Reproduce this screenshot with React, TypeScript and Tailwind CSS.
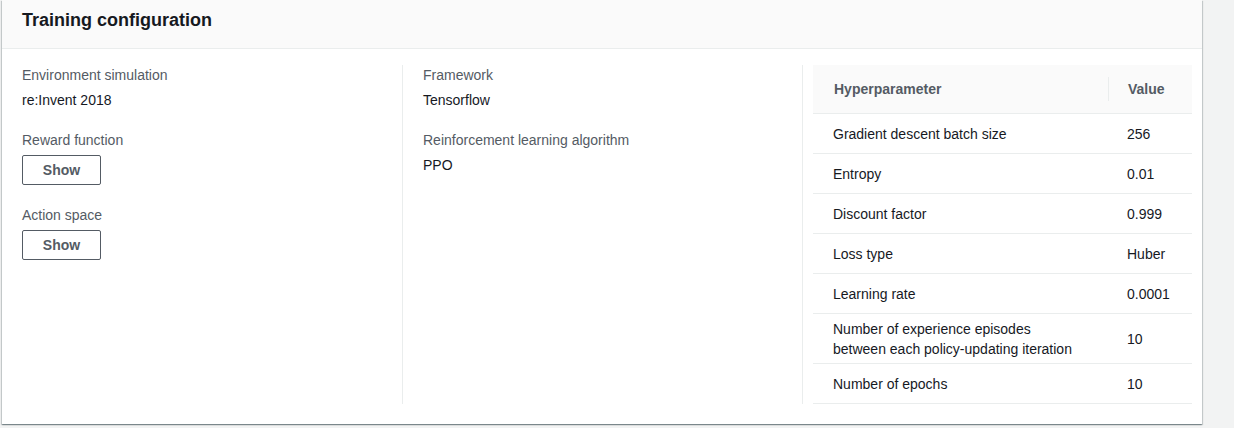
import React from "react";

const rows: { name: React.ReactNode; value: string; tall?: boolean }[] = [
  { name: "Gradient descent batch size", value: "256" },
  { name: "Entropy", value: "0.01" },
  { name: "Discount factor", value: "0.999" },
  { name: "Loss type", value: "Huber" },
  { name: "Learning rate", value: "0.0001" },
  {
    name: (
      <>
        Number of experience episodes
        <br />
        between each policy-updating iteration
      </>
    ),
    value: "10",
    tall: true,
  },
  { name: "Number of epochs", value: "10" },
];

function Label({ children }: { children: React.ReactNode }) {
  return <div className="text-[14px] leading-[22px] text-[#545b64]">{children}</div>;
}

function Value({ children }: { children: React.ReactNode }) {
  return <div className="mt-[3px] text-[14px] leading-[22px] text-[#16191f]">{children}</div>;
}

function ShowButton() {
  return (
    <button className="mt-[4px] flex h-[30px] w-[79px] items-center justify-center rounded-[2px] border border-[#545b64] bg-white text-[14px] font-bold leading-[20px] text-[#545b64]">
      Show
    </button>
  );
}

export default function App() {
  return (
    <div
      className="h-[428px] w-[1234px] overflow-hidden bg-[#f2f3f3]"
      style={{ fontFamily: '"Liberation Sans", Arial, sans-serif' }}
    >
      <div className="ml-[2px] w-[1200px] bg-white shadow-[0_1px_1px_0_rgba(0,28,36,0.3),1px_1px_1px_0_rgba(0,28,36,0.15),-1px_1px_1px_0_rgba(0,28,36,0.15)]">
        <div className="h-[49px] border-b border-[#eaeded] bg-[#fafafa] pl-[20px] pt-[8px]">
          <h2 className="text-[18px] font-bold leading-[25px] text-[#16191f]">Training configuration</h2>
        </div>
        <div className="flex pb-[20px] pt-[16px]">
          <div className="w-[400px] pl-[20px]">
            <div className="-mt-px">
              <Label>Environment simulation</Label>
              <Value>re:Invent 2018</Value>
              <div className="mt-[18px]">
                <Label>Reward function</Label>
                <ShowButton />
              </div>
              <div className="mt-[19px]">
                <Label>Action space</Label>
                <ShowButton />
              </div>
            </div>
          </div>
          <div className="w-[400px] border-l border-[#eaeded] pl-[20px]">
            <div className="-mt-px">
              <Label>Framework</Label>
              <Value>Tensorflow</Value>
              <div className="mt-[18px]">
                <Label>Reinforcement learning algorithm</Label>
                <Value>PPO</Value>
              </div>
            </div>
          </div>
          <div className="flex-1 border-l border-[#eaeded] pl-[10px] pr-[10px]">
            <div className="w-[379px]">
              <div className="grid h-[49px] grid-cols-[295px_84px] items-center border-b border-[#eaeded] bg-[#fafafa] text-[14px] font-bold leading-[22px] text-[#545b64]">
                <div className="pl-[21px]">Hyperparameter</div>
                <div className="flex h-[24px] items-center border-l border-[#eaeded] pl-[19px]">Value</div>
              </div>
              {rows.map((r, i) => (
                <div
                  key={i}
                  className={`grid grid-cols-[295px_84px] items-center border-b border-[#eaeded] text-[14px] text-[#16191f] ${
                    r.tall ? "h-[50px] leading-[20px]" : "h-[40px] leading-[22px]"
                  }`}
                >
                  <div className="pl-[20px]">{r.name}</div>
                  <div className="pl-[19px]">{r.value}</div>
                </div>
              ))}
            </div>
          </div>
        </div>
      </div>
    </div>
  );
}
